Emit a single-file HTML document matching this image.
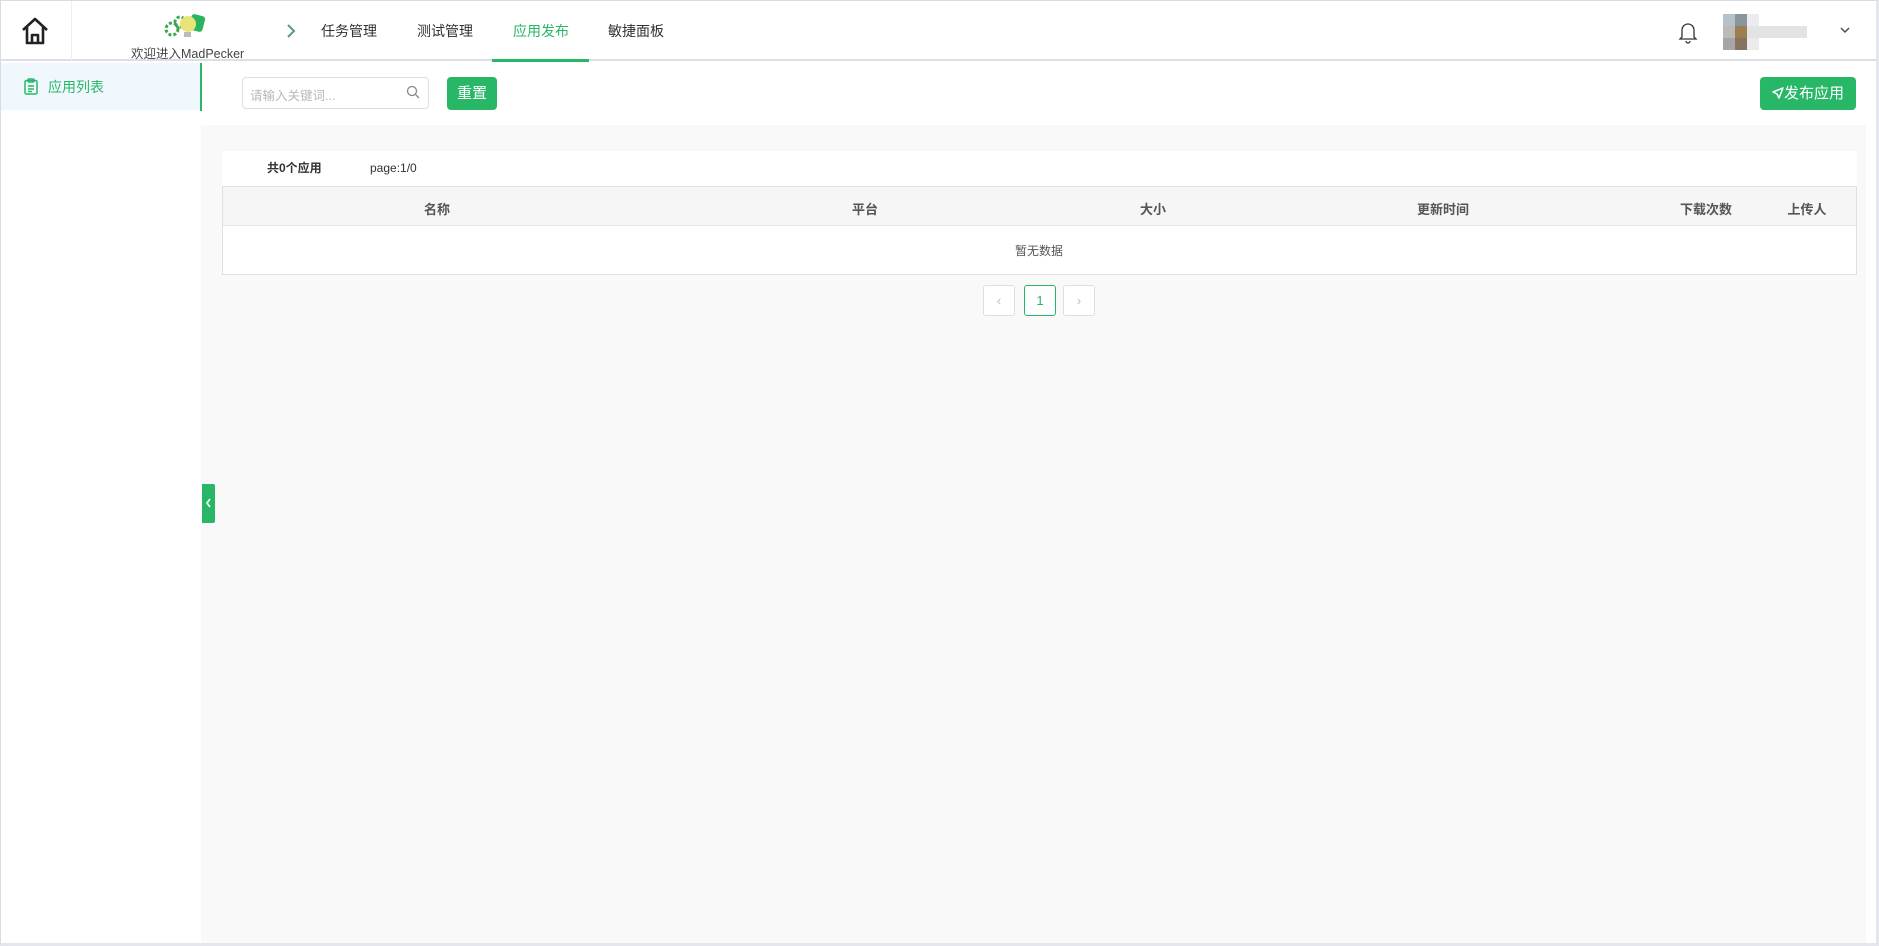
<!DOCTYPE html>
<html><head><meta charset="utf-8"><style>
*{box-sizing:border-box;margin:0;padding:0}
body{width:1879px;height:946px;overflow:hidden;background:#fff;font-family:"Liberation Sans","Noto Sans CJK SC",sans-serif;color:#303133;position:relative}
.frame{position:absolute;left:0;top:0;width:1879px;height:946px;border:1px solid #d8dce3;border-right:3px solid #e3e6ec;border-bottom:3px solid #e3e6ec}
.abs{position:absolute}
.hdr{left:0;top:0;width:1879px;height:61px;border-bottom:2px solid #dcdfe6;background:#fff}
.nav{top:21px;font-size:14px;color:#303133}
.green{color:#27b766}
.side{left:1px;top:61px;width:200px;height:882px;background:#fff}
.main{left:201px;top:125px;width:1665px;height:818px;background:#f9f9f9}
.btn{background:#27b766;color:#fff;border-radius:4px;font-size:15px;text-align:center;line-height:33px}
.th{top:199px;font-size:13px;font-weight:bold;color:#555;transform:translateX(-50%)}
.pg{width:32px;height:31px;border:1px solid #dcdfe6;border-radius:3px;background:#fff;text-align:center;line-height:29px;font-size:13px;color:#bbb;top:285px}
</style></head><body>
<div class="abs hdr"></div>
<div class="abs" style="left:71px;top:1px;width:1px;height:60px;background:#eee"></div>
<svg class="abs" style="left:20px;top:16px" width="30" height="30" viewBox="0 0 30 30" fill="none" stroke="#222" stroke-width="2.6" stroke-linejoin="round"><path d="M3 14 L15 3 L27 14"/><path d="M7 11 V27 H23 V11"/><path d="M12 27 V19 H18 V27"/></svg>
<svg class="abs" style="left:162px;top:13px" width="46" height="26" viewBox="0 0 46 26"><circle cx="10" cy="16" r="6" fill="none" stroke="#3aa84c" stroke-width="3" stroke-dasharray="3 2"/><circle cx="18" cy="9" r="5" fill="none" stroke="#3aa84c" stroke-width="3" stroke-dasharray="3 2"/><rect x="28" y="2" width="14" height="16" rx="3" fill="#2bb45f" transform="rotate(15 35 10)"/><circle cx="26" cy="11" r="8" fill="#e9e47a"/><rect x="22" y="19" width="7" height="5" fill="#bbb"/></svg>
<div class="abs" style="left:131px;top:43px;font-size:12.5px;color:#444">欢迎进入MadPecker</div>
<svg class="abs" style="left:285px;top:23px" width="12" height="16" viewBox="0 0 12 16"><path d="M3 2 L9 8 L3 14" fill="none" stroke="#5a9a7a" stroke-width="2"/></svg>
<div class="abs nav" style="left:321px">任务管理</div>
<div class="abs nav" style="left:417px">测试管理</div>
<div class="abs nav green" style="left:513px">应用发布</div>
<div class="abs" style="left:492px;top:59px;width:97px;height:3px;background:#27b766"></div>
<div class="abs nav" style="left:608px">敏捷面板</div>
<svg class="abs" style="left:1678px;top:20px" width="20" height="24" viewBox="0 0 20 24" fill="none" stroke="#333" stroke-width="1.3"><path d="M4 17 V10 a6 6 0 0 1 12 0 V17 L18 19 H2 Z"/><path d="M8 21 a2 2 0 0 0 4 0"/></svg>
<div class="abs" style="left:1723px;top:14px;width:12px;height:12px;background:#b4c2cc"></div>
<div class="abs" style="left:1735px;top:14px;width:12px;height:12px;background:#8a969c"></div>
<div class="abs" style="left:1747px;top:14px;width:12px;height:12px;background:#ecebee"></div>
<div class="abs" style="left:1723px;top:26px;width:12px;height:12px;background:#bcbab4"></div>
<div class="abs" style="left:1735px;top:26px;width:12px;height:12px;background:#9c7f50"></div>
<div class="abs" style="left:1747px;top:26px;width:60px;height:12px;background:#e3e3e5"></div>
<div class="abs" style="left:1723px;top:38px;width:12px;height:12px;background:#a6a6a6"></div>
<div class="abs" style="left:1735px;top:38px;width:12px;height:12px;background:#877362"></div>
<div class="abs" style="left:1747px;top:38px;width:12px;height:12px;background:#ebebeb"></div>
<svg class="abs" style="left:1840px;top:26px" width="10" height="8" viewBox="0 0 10 8"><path d="M1 2 L5 6 L9 2" fill="none" stroke="#445" stroke-width="1.4"/></svg>

<div class="abs side"></div>
<div class="abs" style="left:1px;top:63px;width:199px;height:47px;background:#f0f8fe"></div>
<div class="abs" style="left:200px;top:63px;width:2px;height:48px;background:#27b766"></div>
<svg class="abs" style="left:24px;top:78px" width="14" height="17" viewBox="0 0 14 17" fill="none" stroke="#27b766" stroke-width="1.5"><rect x="1" y="2.5" width="12" height="13.5" rx="1.5"/><rect x="4" y="1" width="6" height="3" rx="1"/><path d="M4 8 H10 M4 11 H10 M4 13.5 H8"/></svg>
<div class="abs green" style="left:48px;top:77px;font-size:14px">应用列表</div>

<div class="abs main"></div>
<div class="abs" style="left:242px;top:77px;width:187px;height:32px;border:1px solid #dcdfe6;border-radius:4px;background:#fff"></div>
<div class="abs" style="left:250px;top:85px;font-size:12.5px;color:#b8b8b8">请输入关键词...</div>
<svg class="abs" style="left:406px;top:85px" width="14" height="14" viewBox="0 0 14 14" fill="none" stroke="#888" stroke-width="1.3"><circle cx="6" cy="6" r="4.5"/><path d="M9.5 9.5 L13 13"/></svg>
<div class="abs btn" style="left:447px;top:77px;width:50px;height:33px">重置</div>
<div class="abs btn" style="left:1760px;top:77px;width:96px;height:33px"><svg width="12" height="12" viewBox="0 0 12 12" style="vertical-align:-1px"><path d="M11 1 L1 5 L5 7 L7 11 Z" fill="none" stroke="#fff" stroke-width="1.5" stroke-linejoin="round"/></svg>发布应用</div>

<div class="abs" style="left:222px;top:151px;width:1635px;height:124px;background:#fff"></div>
<div class="abs" style="left:267px;top:160px;font-size:12px;font-weight:bold;color:#333;line-height:16px">共0个应用</div>
<div class="abs" style="left:370px;top:160px;font-size:12px;color:#333;line-height:16px">page:1/0</div>
<div class="abs" style="left:222px;top:186px;width:1635px;height:89px;border:1px solid #e0e0e0"></div>
<div class="abs" style="left:223px;top:187px;width:1633px;height:39px;background:#f6f6f6;border-bottom:1px solid #e6e6e6"></div>
<div class="abs th" style="left:437px">名称</div>
<div class="abs th" style="left:865px">平台</div>
<div class="abs th" style="left:1153px">大小</div>
<div class="abs th" style="left:1443px">更新时间</div>
<div class="abs th" style="left:1706px">下载次数</div>
<div class="abs th" style="left:1807px">上传人</div>
<div class="abs" style="left:1039px;top:242px;font-size:12px;color:#555;transform:translateX(-50%)">暂无数据</div>

<div class="abs pg" style="left:983px">‹</div>
<div class="abs pg" style="left:1024px;border-color:#27b766;color:#27b766">1</div>
<div class="abs pg" style="left:1063px">›</div>

<div class="abs" style="left:202px;top:484px;width:13px;height:39px;background:#27b766;border-radius:0 2px 2px 0"></div>
<svg class="abs" style="left:205px;top:498px" width="7" height="10" viewBox="0 0 7 10"><path d="M5 1 L2 5 L5 9" fill="none" stroke="#fff" stroke-width="1.6"/></svg>
<div class="frame"></div>
</body></html>
